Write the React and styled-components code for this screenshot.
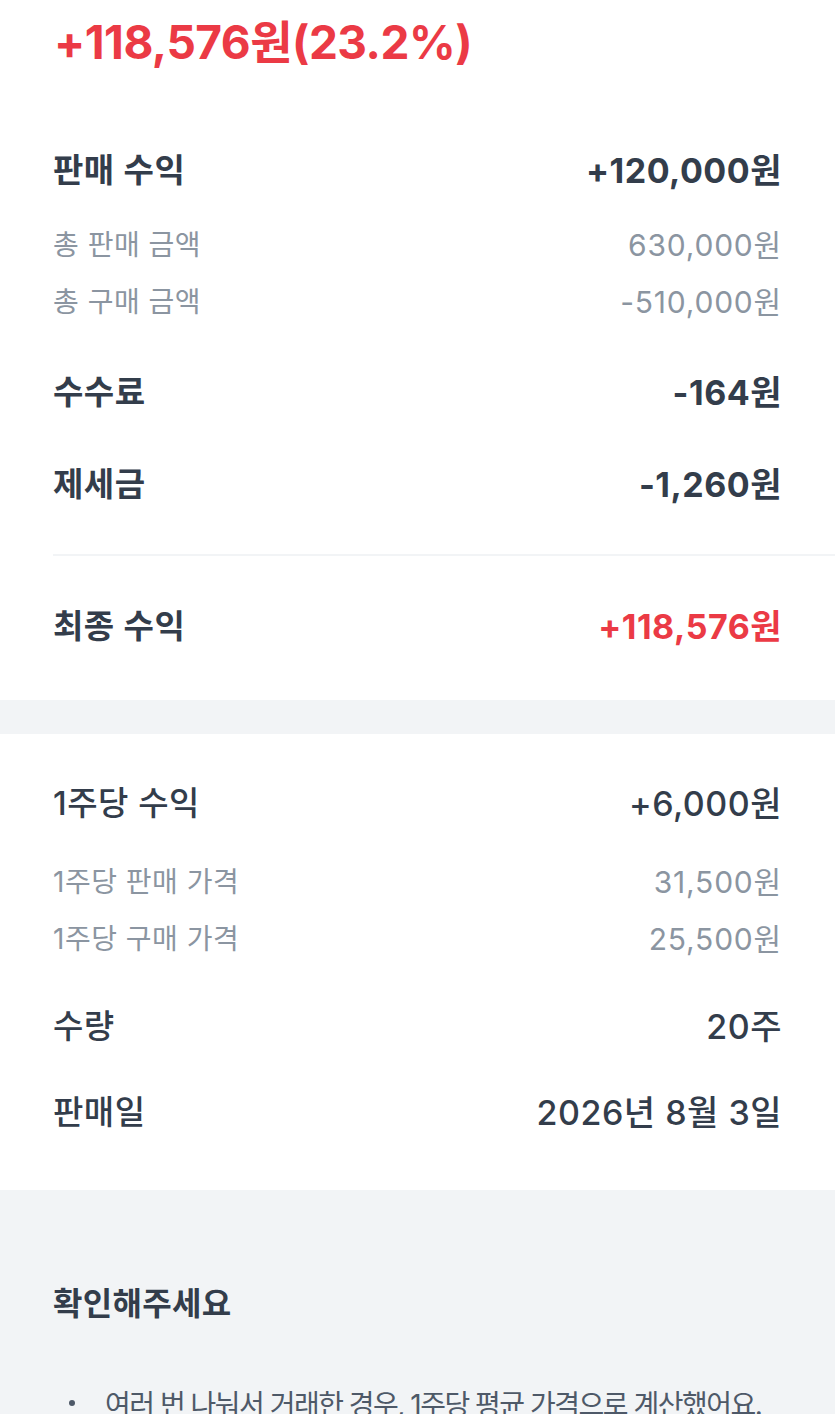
import React from "react";
import styled, { createGlobalStyle } from "styled-components";

const GlobalStyle = createGlobalStyle`
  html, body {
    margin: 0;
    padding: 0;
    background: #f2f4f6;
  }
  body {
    font-family: "Inter", "Noto Sans CJK KR", "Noto Sans", sans-serif;
    color: #333d4b;
    -webkit-font-smoothing: antialiased;
  }
`;

const Page = styled.div`
  width: 835px;
  display: flex;
  flex-direction: column;
`;

const Section = styled.section`
  background: #ffffff;
  padding: ${({ $pad }) => $pad || "0"};
  display: flex;
  flex-direction: column;
`;

const Headline = styled.div`
  height: 78px;
  display: flex;
  align-items: center;
  padding-left: 54px;
  font-size: 46px;
  font-weight: 700;
  letter-spacing: -0.5px;
  color: #eb3a45;
`;

const Group = styled.div`
  display: flex;
  flex-direction: column;
  padding: 0 53px 0 53px;
  margin-top: ${({ $gap }) => $gap ?? 0}px;
`;

const Row = styled.div`
  height: 60px;
  display: flex;
  align-items: center;
  justify-content: space-between;
`;

const Label = styled.span`
  font-size: 33px;
  font-weight: ${({ $strong }) => ($strong ? 600 : 500)};
  letter-spacing: 0.5px;
  color: #333d4b;
`;

const Value = styled.span`
  font-size: 34px;
  font-weight: ${({ $strong }) => ($strong ? 700 : 500)};
  letter-spacing: 0.5px;
  color: ${({ $red }) => ($red ? "#eb3a45" : "#333d4b")};
`;

const SubList = styled.div`
  display: flex;
  flex-direction: column;
  margin-top: ${({ $top }) => $top}px;
`;

const SubRow = styled.div`
  height: 57px;
  display: flex;
  align-items: center;
  justify-content: space-between;
`;

const SubLabel = styled.span`
  font-size: 28px;
  font-weight: 400;
  letter-spacing: 0.5px;
  color: #8b95a1;
`;

const SubValue = styled.span`
  font-size: 30px;
  font-weight: 400;
  letter-spacing: 0.8px;
  color: #8b95a1;
`;

const Divider = styled.div`
  height: 2px;
  margin: 42px 0 38px 53px;
  background: #f2f4f6;
`;

const Band = styled.div`
  height: 34px;
  background: #f2f4f6;
`;

const Notice = styled.section`
  padding: 86px 54px 0 53px;
  display: flex;
  flex-direction: column;
`;

const NoticeTitle = styled.h3`
  margin: 0;
  height: 50px;
  display: flex;
  align-items: center;
  font-size: 32px;
  font-weight: 700;
  letter-spacing: 0.3px;
  color: #333d4b;
`;

const Bullets = styled.ul`
  list-style: none;
  margin: 55px 0 0;
  padding: 0;
`;

const Bullet = styled.li`
  display: flex;
  align-items: center;
  gap: 30px;
  height: 44px;
  font-size: 28px;
  letter-spacing: -1.5px;
  color: #4e5968;
  &::before {
    content: "";
    width: 6px;
    height: 6px;
    margin-left: 16px;
    border-radius: 50%;
    background: #4e5968;
    flex: none;
  }
`;

const MainRow = ({ label, value, strong, red }) => (
  <Row>
    <Label $strong={strong}>{label}</Label>
    <Value $strong={strong} $red={red}>{value}</Value>
  </Row>
);

const Details = ({ items, top }) => (
  <SubList $top={top}>
    {items.map(([l, v]) => (
      <SubRow key={l}>
        <SubLabel>{l}</SubLabel>
        <SubValue>{v}</SubValue>
      </SubRow>
    ))}
  </SubList>
);

export default function App() {
  return (
    <Page>
      <GlobalStyle />
      <Section $pad="0 0 46px">
        <Headline>+118,576원(23.2%)</Headline>
        <Group $gap={60}>
          <MainRow label="판매 수익" value="+120,000원" strong />
          <Details
            top={16}
            items={[
              ["총 판매 금액", "630,000원"],
              ["총 구매 금액", "-510,000원"],
            ]}
          />
        </Group>
        <Group $gap={32}>
          <MainRow label="수수료" value="-164원" strong />
        </Group>
        <Group $gap={32}>
          <MainRow label="제세금" value="-1,260원" strong />
        </Group>
        <Divider />
        <Group>
          <MainRow label="최종 수익" value="+118,576원" strong red />
        </Group>
      </Section>
      <Band />
      <Section $pad="37px 0 50px">
        <Group>
          <MainRow label="1주당 수익" value="+6,000원" />
          <Details
            top={20}
            items={[
              ["1주당 판매 가격", "31,500원"],
              ["1주당 구매 가격", "25,500원"],
            ]}
          />
        </Group>
        <Group $gap={29}>
          <MainRow label="수량" value="20주" />
        </Group>
        <Group $gap={26}>
          <MainRow label="판매일" value="2026년 8월 3일" />
        </Group>
      </Section>
      <Notice>
        <NoticeTitle>확인해주세요</NoticeTitle>
        <Bullets>
          <Bullet>여러 번 나눠서 거래한 경우, 1주당 평균 가격으로 계산했어요.</Bullet>
        </Bullets>
      </Notice>
    </Page>
  );
}
